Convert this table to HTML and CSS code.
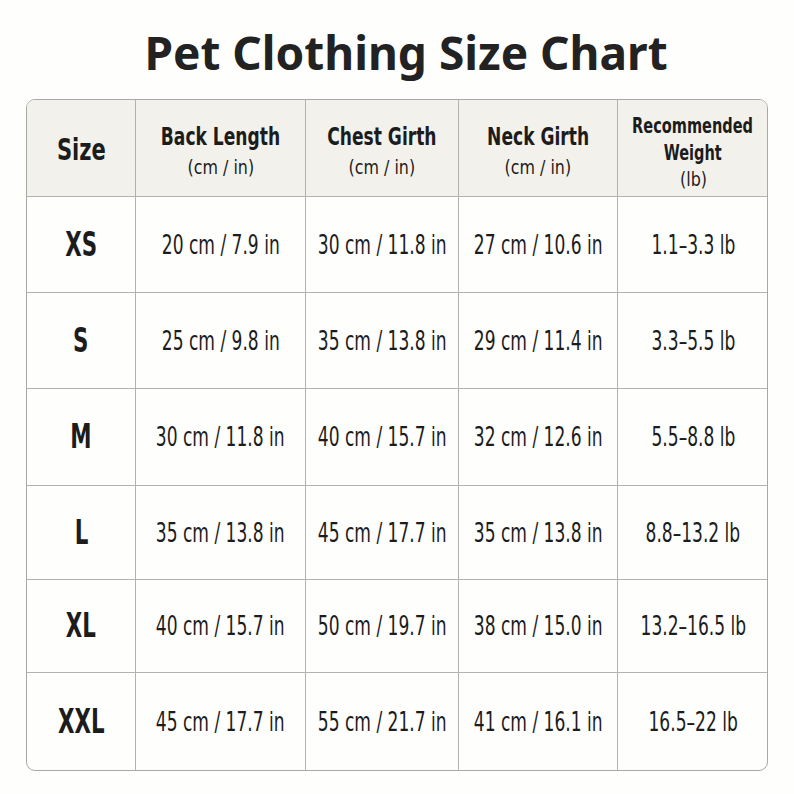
FILE: index.html
```html
<!DOCTYPE html>
<html lang="en">
<head>
<meta charset="utf-8">
<title>Pet Clothing Size Chart</title>
<link rel="stylesheet" href="styles.css">
</head>
<body>
<main class="page">
  <h1 class="title">Pet Clothing Size Chart</h1>
  <div class="chart">
    <div class="cell head"><span class="size-head">Size</span></div>
    <div class="cell head shifted"><span class="h-main">Back Length</span><span class="h-sub">(cm / in)</span></div>
    <div class="cell head shifted"><span class="h-main">Chest Girth</span><span class="h-sub">(cm / in)</span></div>
    <div class="cell head shifted"><span class="h-main">Neck Girth</span><span class="h-sub">(cm / in)</span></div>
    <div class="cell head last shifted"><span class="h-main small">Recommended</span><span class="h-main small">Weight</span><span class="h-sub small">(lb)</span></div>

    <div class="cell"><span class="size">XS</span></div>
    <div class="cell"><span class="v">20 cm / 7.9 in</span></div>
    <div class="cell"><span class="v">30 cm / 11.8 in</span></div>
    <div class="cell"><span class="v">27 cm / 10.6 in</span></div>
    <div class="cell last"><span class="v">1.1–3.3 lb</span></div>

    <div class="cell"><span class="size">S</span></div>
    <div class="cell"><span class="v">25 cm / 9.8 in</span></div>
    <div class="cell"><span class="v">35 cm / 13.8 in</span></div>
    <div class="cell"><span class="v">29 cm / 11.4 in</span></div>
    <div class="cell last"><span class="v">3.3–5.5 lb</span></div>

    <div class="cell"><span class="size">M</span></div>
    <div class="cell"><span class="v">30 cm / 11.8 in</span></div>
    <div class="cell"><span class="v">40 cm / 15.7 in</span></div>
    <div class="cell"><span class="v">32 cm / 12.6 in</span></div>
    <div class="cell last"><span class="v">5.5–8.8 lb</span></div>

    <div class="cell"><span class="size">L</span></div>
    <div class="cell"><span class="v">35 cm / 13.8 in</span></div>
    <div class="cell"><span class="v">45 cm / 17.7 in</span></div>
    <div class="cell"><span class="v">35 cm / 13.8 in</span></div>
    <div class="cell last"><span class="v">8.8–13.2 lb</span></div>

    <div class="cell"><span class="size">XL</span></div>
    <div class="cell"><span class="v">40 cm / 15.7 in</span></div>
    <div class="cell"><span class="v">50 cm / 19.7 in</span></div>
    <div class="cell"><span class="v">38 cm / 15.0 in</span></div>
    <div class="cell last"><span class="v">13.2–16.5 lb</span></div>

    <div class="cell bottom"><span class="size">XXL</span></div>
    <div class="cell bottom"><span class="v">45 cm / 17.7 in</span></div>
    <div class="cell bottom"><span class="v">55 cm / 21.7 in</span></div>
    <div class="cell bottom"><span class="v">41 cm / 16.1 in</span></div>
    <div class="cell last bottom"><span class="v">16.5–22 lb</span></div>
  </div>
</main>
</body>
</html>
```

FILE: styles.css
```css
html, body {
  margin: 0;
  padding: 0;
  background: #fefefd;
}
.page {
  width: 794px;
  height: 794px;
  box-sizing: border-box;
  padding: 24px 26px 0 26px;
  display: flex;
  flex-direction: column;
  align-items: stretch;
}
.title {
  margin: 0 0 0 18px;
  height: 75px;
  text-align: center;
  font-family: "Noto Sans", "Open Sans", sans-serif;
  font-weight: 700;
  font-size: 46px;
  line-height: 56px;
  color: #222222;
  letter-spacing: 0;
}
.chart {
  display: grid;
  grid-template-columns: 109px 170px 153px 159px 150px;
  grid-template-rows: 97px 96px 96px 97px 94px 93px 97px;
  border: 1.5px solid #aaa8a4;
  border-radius: 9px;
  overflow: hidden;
  background: #fefefd;
  font-family: "DejaVu Sans Condensed", "DejaVu Sans", sans-serif;
  font-stretch: condensed;
  color: #1c1c1c;
}
.cell {
  display: flex;
  flex-direction: column;
  align-items: center;
  justify-content: center;
  border-right: 1.5px solid #b4b2ae;
  border-bottom: 1.5px solid #b4b2ae;
  text-align: center;
  white-space: nowrap;
}
.cell.last { border-right: none; }
.cell.bottom { border-bottom: none; }
.head {
  background: #f3f1eb;
}
.head.shifted {
  padding-top: 9px;
}
.cell > span {
  display: block;
  transform: scaleX(0.74);
}
.size-head {
  font-size: 30px;
  font-weight: 700;
  line-height: 34px;
  transform: scaleX(0.78) !important;
  margin-top: 4px;
}
.h-main {
  font-size: 25px;
  font-weight: 700;
  line-height: 30px;
  transform: scaleX(0.76) !important;
}
.h-sub {
  font-size: 19px;
  line-height: 31px;
  transform: scaleX(0.93) !important;
}
.h-main.small {
  font-size: 21px;
  line-height: 27px;
  transform: scaleX(0.77) !important;
}
.h-sub.small {
  font-size: 19px;
  line-height: 25px;
}
.size {
  font-size: 33px;
  font-weight: 700;
  line-height: 38px;
  transform: scaleX(0.72) !important;
}
.v {
  font-size: 26px;
  line-height: 32px;
  transform: scaleX(0.73) !important;
}
```
